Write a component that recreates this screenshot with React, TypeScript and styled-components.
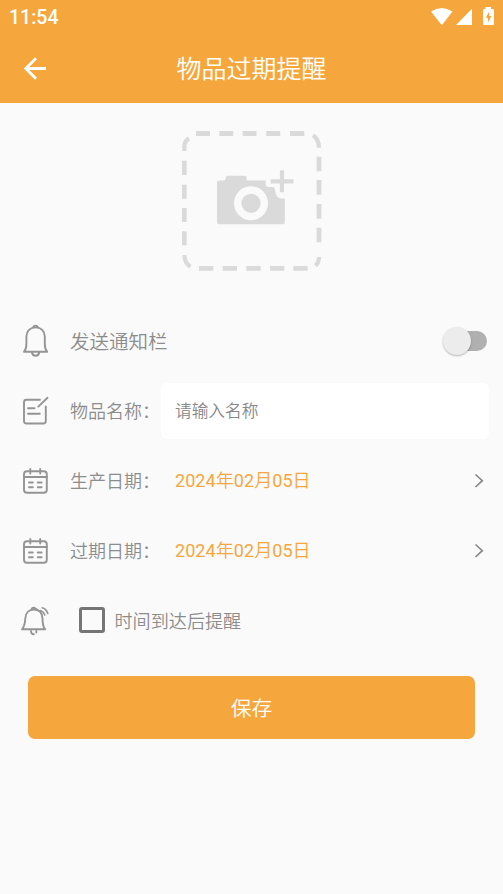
import React from "react";
import styled, { createGlobalStyle } from "styled-components";

const ORANGE = "#f5a73d";
const GREY = "#949494";

const GlobalStyle = createGlobalStyle`
  *, *::before, *::after { box-sizing: border-box; }
  body {
    margin: 0;
    background: #fafafa;
    font-family: Roboto, "Noto Sans CJK SC", sans-serif;
  }
  button, input { font-family: inherit; }
`;

const Screen = styled.main`
  width: 100%;
  min-height: 894px;
  display: flex;
  flex-direction: column;
  background: #fafafa;
`;

const Header = styled.header`
  height: 103px;
  background: ${ORANGE};
  color: #fff;
`;

const StatusBar = styled.div`
  height: 34px;
  display: flex;
  align-items: center;
  justify-content: space-between;
  padding: 0 8px 0 9px;
`;

const Clock = styled.span`
  padding-top: 1px;
  font-size: 19.5px;
  font-weight: 500;
  line-height: 34px;
`;

const StatusIcons = styled.svg`
  display: block;
  width: 66px;
  height: 34px;
`;

const TitleBar = styled.div`
  height: 69px;
  display: grid;
  grid-template-columns: 70px 1fr 70px;
  align-items: center;
`;

const IconButton = styled.button`
  width: 70px;
  height: 69px;
  padding: 0;
  border: 0;
  background: none;
  color: inherit;
  svg { display: block; }
`;

const Title = styled.h1`
  margin: 0;
  padding-top: 3px;
  text-align: center;
  font-size: 25px;
  font-weight: 350;
  line-height: 66px;
`;

const PhotoArea = styled.section`
  height: 203px;
  padding-top: 28px;
  display: flex;
  justify-content: center;
  align-items: flex-start;
  svg { display: block; }
`;

const Row = styled.div`
  height: 70px;
  display: flex;
  align-items: center;
  padding: 0 14px 0 0;
`;

const IconSlot = styled.span`
  width: 70px;
  flex: none;
  svg { display: block; }
`;

const Label = styled.span<{ $size?: number; $width?: number; $drop?: number }>`
  flex: none;
  width: ${({ $width }) => ($width ? `${$width}px` : "auto")};
  padding-top: ${({ $drop }) => $drop ?? 2}px;
  font-size: ${({ $size }) => $size ?? 18}px;
  font-weight: 350;
  line-height: 28px;
  color: #8c8c8c;
  white-space: nowrap;
`;

const Spacer = styled.span`
  flex: 1;
`;

const NameInput = styled.input`
  flex: 1;
  min-width: 0;
  height: 56px;
  padding: 0 14px;
  border: 0;
  border-radius: 6px;
  outline: none;
  background: #fff;
  font-size: 16.7px;
  font-weight: 350;
  color: #666;
  &::placeholder { color: #888; opacity: 1; }
`;

const DateValue = styled.button`
  flex: 1;
  height: 56px;
  padding: 0 3px 0 14px;
  display: flex;
  align-items: center;
  justify-content: space-between;
  border: 0;
  background: none;
  font-size: 18.1px;
  font-weight: 400;
  line-height: 28px;
  color: ${ORANGE};
  svg { display: block; }
`;

const DateUnit = styled.span`
  font-weight: 350;
`;

const Track = styled.button`
  width: 43px;
  height: 20px;
  margin-right: 2px;
  padding: 0;
  display: flex;
  align-items: center;
  border: 0;
  border-radius: 10px;
  background: #b0b0b0;
`;

const Thumb = styled.span`
  width: 28px;
  height: 28px;
  flex: none;
  margin-left: -1px;
  border-radius: 50%;
  background: #ececec;
  box-shadow: 0 1px 2px rgba(0, 0, 0, 0.28);
`;

const Checkbox = styled.button`
  width: 26px;
  height: 26px;
  margin: -2px 9.5px 0 9px;
  padding: 0;
  border: 3px solid #757575;
  border-radius: 3px;
  background: transparent;
`;

const SaveButton = styled.button`
  height: 63px;
  margin: 20px 28px 0;
  padding: 3px 0 0;
  border: 0;
  border-radius: 7px;
  background: ${ORANGE};
  color: #fff;
  font-size: 20.8px;
  font-weight: 350;
  line-height: 60px;
`;

const StatusGlyphs = () => (
  <StatusIcons viewBox="429 0 66 34" fill="#fff" aria-hidden="true">
    <path d="M431 11.5Q441.800 4.300 452.500 11.500L442.600 24.300Q441.800 25.200 441 24.300Z" />
    <path d="M472 8.800V25H456Z" />
    <path
      fillRule="evenodd"
      d="M485.500 7H491V9H493Q494 9 494 10V24Q494 25 493 25H484Q483 25 483 24V10Q483 9 484 9H485.500ZM489.300 11.500L485.700 17.800H488V22.300L491.500 16H489.300Z"
    />
  </StatusIcons>
);

const BackArrow = () => (
  <svg width="70" height="69" viewBox="0 34 70 69" fill="none" stroke="#fff" strokeWidth="2.800">
    <path d="M46 68.500H26M36 58.300L25.800 68.500L36 78.700" />
  </svg>
);

const AddPhoto = () => (
  <svg width="140" height="140" viewBox="0 0 140 140" fill="none" stroke="#dadada" strokeWidth="4.800">
    <path d="M14 2.500H28M37.300 2.500H51.200M60.700 2.500H74.500M84.300 2.500H98.200M108 2.500H122.300" />
    <path d="M137 25.700V40.300M137 49V63.700M137 73V87.700M137 96.700V111.300" />
    <path d="M17 137.300H31.300M40.700 137.300H55M64.300 137.300H78.700M88 137.300H102.300M111.300 137.300H125.700" />
    <path d="M2.300 29.700V44M2.300 53.700V67.700M2.300 77V91M2.300 100.300V114.300" />
    <path d="M131 4.300Q137 8.500 137 16.700M2.400 20V15Q2.500 10 7 7.500M2.400 124Q2.500 132 8.500 135.800M133.500 134.800Q137 131.500 137 126" strokeWidth="4.300" />
    <path
      fill="#dadada"
      stroke="none"
      fillRule="evenodd"
      d="M37 49.500H41Q43.700 49.500 43.700 47Q43.700 44.800 46 44.800H62.500Q64.700 44.800 64.700 47V49.500H83.700V53Q83.700 56 87 56H90Q93 56 93.300 60Q93.600 66.500 99 67.500H102.800V91.300Q102.800 93.300 100.800 93.300H37Q35 93.300 35 91.300V51.500Q35 49.500 37 49.500ZM69 55.300A17 17 0 1 0 69 89.300A17 17 0 1 0 69 55.300Z"
    />
    <circle cx="69" cy="72.300" r="9.600" fill="#dadada" stroke="none" />
    <path d="M88.700 50.300H111.500M100 39.300V61.300" strokeWidth="4.200" />
  </svg>
);

type GlyphProps = { children: React.ReactNode; top: number };

const Glyph = ({ children, top }: GlyphProps) => (
  <svg
    width="70"
    height="70"
    viewBox={`0 ${top} 70 70`}
    fill="none"
    stroke={GREY}
    strokeWidth="1.900"
    strokeLinecap="round"
    strokeLinejoin="round"
    aria-hidden="true"
  >
    {children}
  </svg>
);

const BellGlyph = () => (
  <Glyph top={306}>
    <path d="M33.300 327.500Q33.500 325.600 35.600 325.600Q37.700 325.600 37.900 327.500" />
    <path d="M24 351.800H47.200C45.200 349.500 44.800 347.500 44.800 344V336.500C44.800 331 41 327.400 35.600 327.400S26.400 331 26.400 336.500V344C26.400 347.500 26 349.500 24 351.800Z" />
    <path d="M32 352.500Q32.500 355.700 35.600 355.700T39.200 352.500" />
  </Glyph>
);

const NoteGlyph = () => (
  <Glyph top={376}>
    <path d="M40 399.800H26.500Q24 399.800 24 402.300V421Q24 423.500 26.500 423.500H43.300Q45.800 423.500 45.800 421V406.500M47.500 397.800L38.300 406.600M28 408.200H34.500M28 413.700H39.800" />
  </Glyph>
);

const CalendarGlyph = () => (
  <Glyph top={446}>
    <rect x="24" y="471.300" width="22.800" height="21.500" rx="3" />
    <path d="M24 477H46.800M30.300 468.900V473.500M40.200 468.900V473.500M29 482.500H32.800M37.800 482.500H41.600M29 487.200H32.800M37.800 487.200H41.600" />
  </Glyph>
);

const RingingBellGlyph = () => (
  <Glyph top={586}>
    <path d="M31.500 609.300Q32 607.500 34.300 607.700L36.500 609.300" />
    <path d="M22 629.300H45.200C42.500 626.500 42.800 624 42.500 618.500C42.200 612.500 39 609.500 34 609.500S25.500 612.800 25.300 618.500C25 624 24.500 626.500 22 629.300Z" />
    <path d="M31 631Q31 634.200 33.800 634.200M36.300 632.500V631" />
    <path d="M40.500 610.500Q43.800 611.800 44.800 615M42.300 607.800Q46.500 609.300 47.800 613.500" strokeWidth="1.600" />
  </Glyph>
);

const Chevron = () => (
  <svg width="12" height="16" viewBox="0 0 12 16" fill="none" stroke="#858585" strokeWidth="1.600">
    <path d="M1.500 1.500L8.300 7.700L1.500 14" />
  </svg>
);

const DateRow = ({ label }: { label: string }) => (
  <Row>
    <IconSlot><CalendarGlyph /></IconSlot>
    <Label $width={91}>{label}</Label>
    <DateValue>
      <span>
        2024<DateUnit>年</DateUnit>02<DateUnit>月</DateUnit>05<DateUnit>日</DateUnit>
      </span>
      <Chevron />
    </DateValue>
  </Row>
);

export default function App() {
  return (
    <>
      <GlobalStyle />
      <Screen>
        <Header>
          <StatusBar>
            <Clock>11:54</Clock>
            <StatusGlyphs />
          </StatusBar>
          <TitleBar>
            <IconButton aria-label="返回"><BackArrow /></IconButton>
            <Title>物品过期提醒</Title>
          </TitleBar>
        </Header>
        <PhotoArea><AddPhoto /></PhotoArea>
        <Row>
          <IconSlot><BellGlyph /></IconSlot>
          <Label $size={19.5} $drop={4}>发送通知栏</Label>
          <Spacer />
          <Track role="switch" aria-checked="false"><Thumb /></Track>
        </Row>
        <Row>
          <IconSlot><NoteGlyph /></IconSlot>
          <Label $width={91}>物品名称：</Label>
          <NameInput placeholder="请输入名称" />
        </Row>
        <DateRow label="生产日期：" />
        <DateRow label="过期日期：" />
        <Row>
          <IconSlot><RingingBellGlyph /></IconSlot>
          <Checkbox role="checkbox" aria-checked="false" />
          <Label $size={18.1}>时间到达后提醒</Label>
        </Row>
        <SaveButton>保存</SaveButton>
      </Screen>
    </>
  );
}
